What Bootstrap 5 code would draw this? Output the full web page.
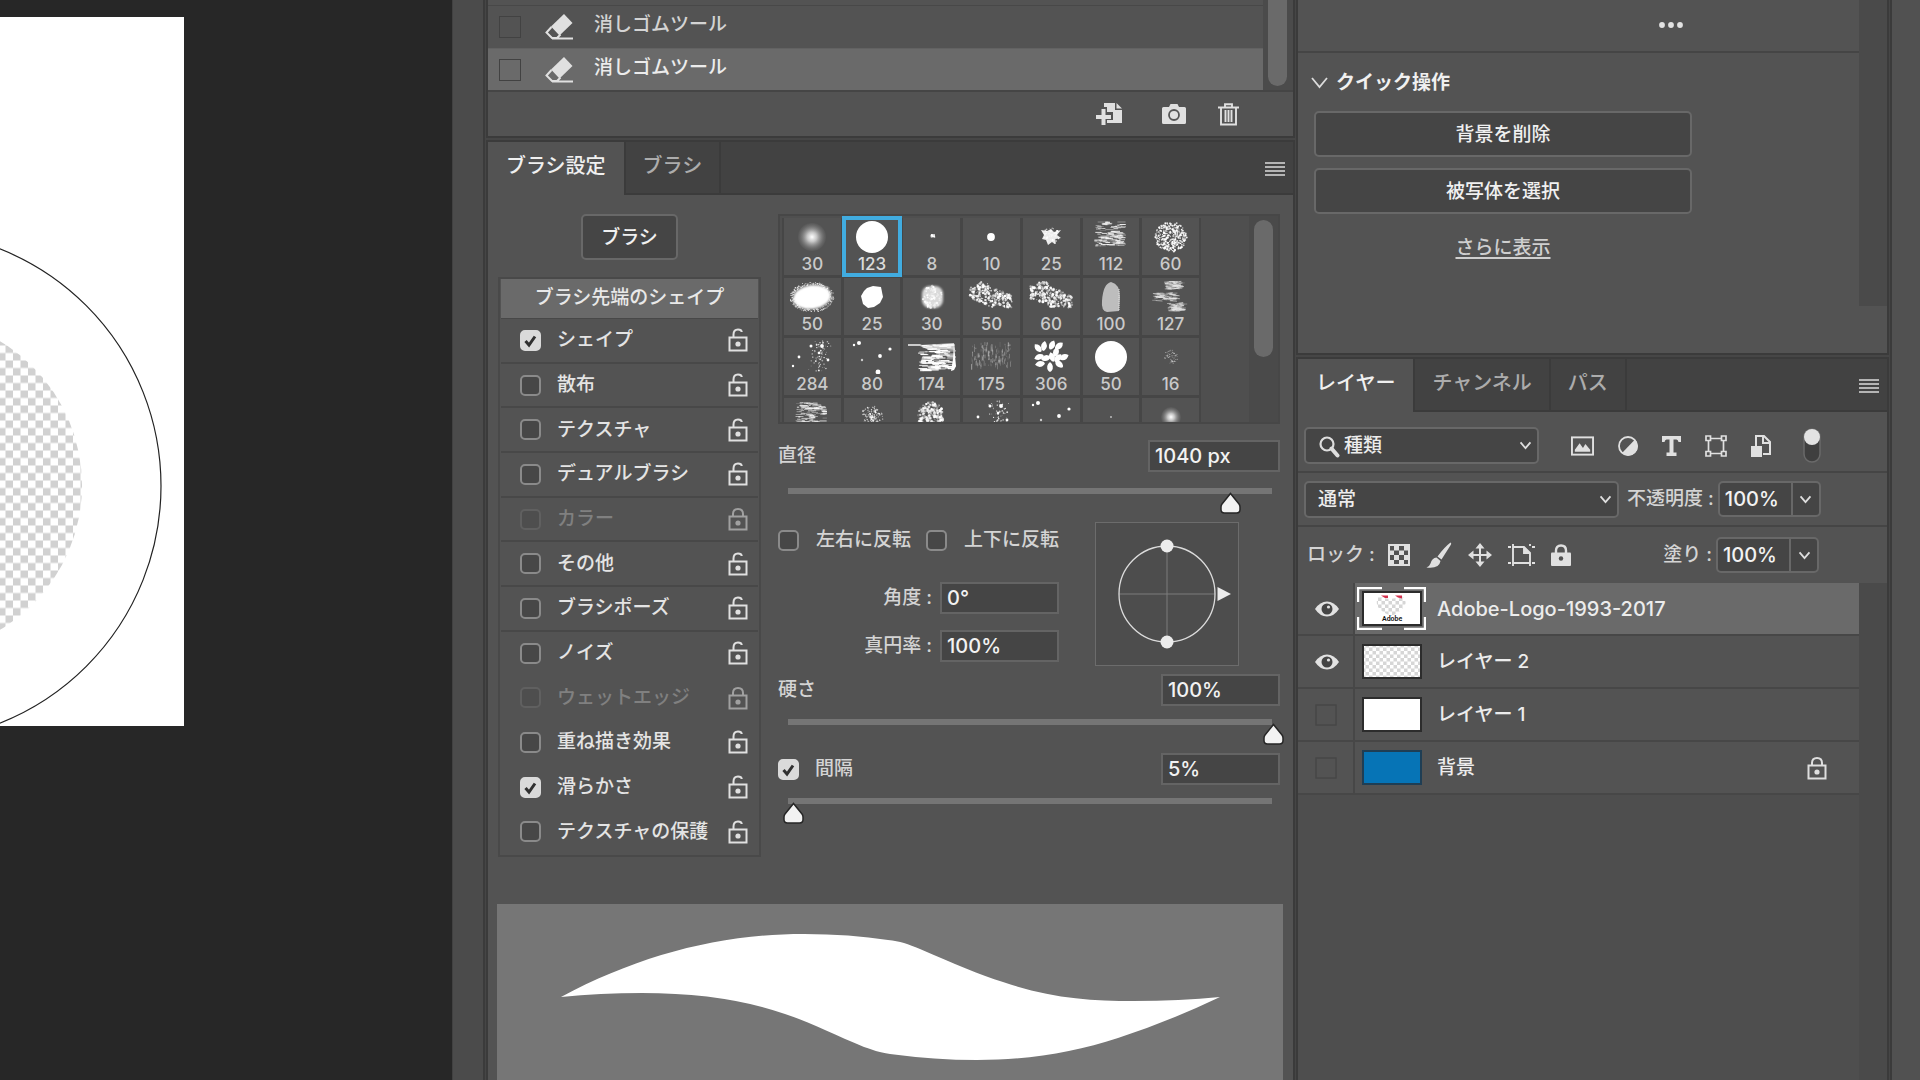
<!DOCTYPE html>
<html lang="ja">
<head>
<meta charset="utf-8">
<meta name="viewport" content="width=device-width, initial-scale=1">
<title>ブラシ設定</title>
<link rel="stylesheet" href="https://cdn.jsdelivr.net/npm/bootstrap@5.3.0/dist/css/bootstrap.min.css">
<style>
:root{--panel:#535353;--dark:#454545;--line:#3b3b3b;--edge:#686868;--sel:#6a6a6a;--soft:#d4d4d4;--bright:#ececec}
body{font-family:Inter,"Noto Sans CJK JP",sans-serif;font-size:19px;line-height:28px;font-weight:500;color:var(--soft);background:#272727}
button,input,select{font:inherit;color:inherit}
svg{display:block;flex:none}
.ink{color:#e0e0e0}
.app{min-width:1600px;height:100vh;overflow:hidden}
.stage{min-width:184px;overflow:hidden;padding-top:17px}
.gutter-l{width:31px;background:#4b4b4b;border-left:1px solid #414141}
.gutter-r{width:28px;background:#515151}
.dock{background:#464646;border:solid var(--line);border-width:0 2px;padding:0 1px;gap:1px}
.dock-a{width:809px}
.dock-b{width:593px}
.pane{background:var(--panel);border:2px solid var(--line)}
.pane-top{border-top:0}
.pane-fill{border-bottom:0;margin-top:2px}
.plain{background:none;border:0;padding:0}
/* tabs */
.tabbar{background:#424242;height:53px;border-bottom:2px solid var(--line)}
.tabbar .nav-link{height:53px;padding:0 17px;font-size:20px;line-height:48px;color:#acacac;border-right:2px solid var(--line);border-radius:0}
.tabbar .nav-link.active{background:var(--panel);color:#f0f0f0;padding:0 18px}
/* history */
.hist{background:#4b4b4b}
.hist-list{padding-top:5px;background:var(--panel)}
.hist-row{height:43px;padding:0 11px;border-top:1px solid #484848}
.hist-row.on{height:42px;background:var(--sel);border-color:#626262;color:var(--bright)}
.hist-row span{line-height:38px}
.sqbox{appearance:none;width:22px;height:22px;margin:0;border:1px solid #424242;background:none;flex:none}
.hist-track{width:30px;padding-left:5px}
.hist-track .thumbbar{border-radius:0 0 10px 10px}
.thumbbar{width:19px;background:var(--sel);border-radius:10px}
.hist-foot{height:46px;border-top:2px solid #454545;padding-right:54px}
/* shared controls */
.btn-ps{background:var(--dark);border:2px solid var(--edge);border-radius:5px;color:#f0f0f0;font-size:19px;font-weight:500;line-height:28px;padding:8px 18px 6px}
.btn-ps:hover{background:#4d4d4d;color:#fff}
.form-check-input.cb{width:21px;height:21px;margin:0;float:none;flex:none;border:2px solid #8a8a8a;border-radius:5px;background-color:#474747}
.form-check-input.cb:checked{background-color:#dadada;border-color:#dadada;background-size:17px;background-image:url("data:image/svg+xml,%3Csvg xmlns='http://www.w3.org/2000/svg' viewBox='0 0 17 17'%3E%3Cpath d='M3.500 9l3.500 4 6-8.500' fill='none' stroke='%23303030' stroke-width='3'/%3E%3C/svg%3E")}
.form-check-input.cb:disabled{border-color:#606060;background-color:#4e4e4e;opacity:1}
.field{height:32px;background:var(--dark);border:2px solid #646464;padding:0 5px;color:#f2f2f2;font-size:20px;line-height:28px;min-width:0}
.w-field{width:119px}
.w-field-lg{width:132px}
.ctl-row{width:502px}
.slider{appearance:none;display:block;width:506px;height:26px;margin:13px 0 0;background:none}
.slider::-webkit-slider-runnable-track{height:26px;background:linear-gradient(#757575,#757575) 10px 0/484px 6px no-repeat}
.slider::-webkit-slider-thumb{appearance:none;width:21px;height:22px;margin-top:4px;background:url("data:image/svg+xml,%3Csvg xmlns='http://www.w3.org/2000/svg' viewBox='0 0 21 22'%3E%3Cpath d='M10.500 1.500L19 12q1 1.300 1 3v2.500q0 3.500-3.500 3.500h-12Q1 21 1 17.500V15q0-1.700 1-3z' fill='%23f2f2f2' stroke='%23262626' stroke-width='1.500'/%3E%3C/svg%3E")}
/* brush settings */
.settings{padding:19px 7px 0 10px;gap:17px}
.opt-col{width:263px}
.opt-box{height:580px;margin-top:17px;border:2px solid #494949;padding:0 1px}
.opt-head{background:var(--sel);height:40px;line-height:38px;border-bottom:1px solid #484848;color:#e8e8e8}
.opt-row{padding:0 10px 0 19px;color:#e4e4e4;border-bottom:2px solid #484848;min-height:0}
.opt-row.open{border-color:transparent}
.opt-row label{margin-left:16px}
.opt-row.off{color:#808080}
.opt-row.off svg{color:#a0a0a0}
.brushes{width:502px;height:210px;overflow:hidden;border:2px solid #474747;background:#4f4f4f;padding:2px 0 0 2px}
.brush-grid{display:grid;grid-template-columns:repeat(7,1fr);grid-auto-rows:57px;gap:3px;width:419px;padding:0 2px;background:#464646}
.brush{background:var(--panel);font-size:17px;line-height:20px;color:#cacaca}
.brush.on{outline:4px solid #41ace0;outline-offset:-2px;color:#dcdcdc}
.brush-track{width:29px;margin-top:-2px;padding:4px 5px;background:#4a4a4a}
.brush-track .thumbbar{height:137px}
.tip{width:144px;height:144px;border:1px solid #6c6c6c;background:#4d4d4d;margin-right:47px}
.flip{padding-top:4px}
.flip label{margin:0 15px 0 17px}
.flip label:last-child{margin-right:0}
.stroke-view{background:#767676;margin:47px 10px 0 9px}
/* properties */
.props{height:353px}
.props-more{height:53px;border-bottom:2px solid #454545;padding:18px 176px 0 0}
.props-track{width:28px;height:306px;background:#4a4a4a}
.quick{padding:16px 167px 0 16px}
.quick h2{font-size:19px;line-height:28px;font-weight:700;color:#f0f0f0;margin:0 0 14px}
.quick h2 svg{margin:0 7px 0 -3px}
.quick a{color:#cfcfcf;text-underline-offset:3px;text-decoration-thickness:2px}
/* layers */
.bar{height:54px;padding-left:6px;border-bottom:2px solid #454545}
.bar-kind{height:61px;padding-top:8px}
.bar-lock{height:56px;padding:0 68px 0 9px;border:0}
.sel-ps{background:var(--dark) url("data:image/svg+xml,%3Csvg xmlns='http://www.w3.org/2000/svg' viewBox='0 0 14 10'%3E%3Cpath d='M1.500 1.500L7 8l5.500-6.500' fill='none' stroke='%23dedede' stroke-width='2'/%3E%3C/svg%3E") right 5px center/13px 9px no-repeat;border:2px solid var(--edge);border-radius:5px;height:37px;padding:1px 24px 0 12px;font-size:19px;line-height:28px;font-weight:500;color:#ececec}
.sel-kind{width:235px;padding-left:38px}
.sel-mode{width:315px}
.kind-wrap svg{position:absolute;left:15px;top:9px}
.pct{width:103px;height:36px;background:var(--dark);border:2px solid var(--edge);border-radius:5px}
.pct input{width:73px;background:none;border:0;border-right:2px solid var(--edge);padding:0 0 0 5px;color:#f2f2f2;font-size:20px}
.pct button{width:26px}
.kinds{margin-left:32px;gap:24px}
.locks{margin-left:13px;gap:16px}
.lay-area{background:#4e4e4e}
.lay-track{width:28px;background:#4a4a4a}
.lay-list{height:212px}
.lay-row{flex:1 1 0;min-height:0;background:var(--panel);border-bottom:2px solid #474747}
.lay-eye{width:57px;padding-left:17px;border-right:2px solid #474747}
.lay-row.on .lay-body{background:var(--sel)}
.lay-body{padding:0 32px 0 7px;color:#ececec}
.lay-thumb{margin-right:15px}
.lay-thumb.framed{margin:0 11px 0 -5px}
.lay-latin{font-size:20px}
.lay-body .ms-auto{color:#dedede}
</style>
</head>
<body>
<svg width="0" height="0" class="position-absolute" aria-hidden="true">
  <defs>
    <pattern id="chk" width="15" height="15" x="13" y="360.500" patternUnits="userSpaceOnUse"><rect width="15" height="15" fill="#fff"/><path d="M7.500 0H15v7.500H7.500zM0 7.500h7.500V15H0z" fill="#d1d1d1"/></pattern>
    <pattern id="chks" width="7" height="7" patternUnits="userSpaceOnUse"><rect width="7" height="7" fill="#fff"/><path d="M3.500 0H7v3.500H3.500zM0 3.500h3.500V7H0z" fill="#d6d6d6"/></pattern>
    <radialGradient id="softdot"><stop offset="0" stop-color="#fff"/><stop offset=".35" stop-color="#c4c4c4"/><stop offset="1" stop-color="#7a7a7a" stop-opacity=".15"/></radialGradient>
    <filter id="fuzz"><feGaussianBlur stdDeviation="1"/></filter>
    <symbol id="i-open" viewBox="0 0 20 24"><path d="M1.500 9.500h17v13h-17zM5.500 9.500V6.500q0-5 4.500-5 3.500 0 3.800 2.500" fill="none" stroke="currentColor" stroke-width="2"/><circle cx="10" cy="16" r="2.600" fill="currentColor"/></symbol>
    <symbol id="i-lock" viewBox="0 0 20 24"><path d="M1.500 9.500h17v13h-17zM5 9.500V7q0-5 5-5t5 5v2.500" fill="none" stroke="currentColor" stroke-width="2"/><circle cx="10" cy="16" r="2.600" fill="currentColor"/></symbol>
    <symbol id="i-erase" viewBox="0 0 29 26"><path d="M19 0l8.500 9L14.500 21.500 6 12.500z" fill="currentColor"/><path d="M6.500 13L1.500 18.500l5.500 5.500h5l3.500-3.500M7 24.500h21" fill="none" stroke="currentColor" stroke-width="2"/></symbol>
    <symbol id="i-menu" viewBox="0 0 20 14"><path d="M0 1h20M0 5h20M0 9h20M0 13h20" stroke="#b4b4b4" stroke-width="1.800"/></symbol>
    <symbol id="i-chev" viewBox="0 0 14 10"><path d="M1.500 1.500L7 8l5.500-6.500" fill="none" stroke="#dedede" stroke-width="2"/></symbol>
    <symbol id="i-eye" viewBox="0 0 24 16"><path d="M0 8Q5 .500 12 .500T24 8q-5 7.500-12 7.500T0 8z" fill="#e2e2e2"/><circle cx="12" cy="8" r="5.500" fill="#454545"/><circle cx="13.500" cy="6" r="1.600" fill="#e2e2e2"/></symbol>
  </defs>
</svg>

<div class="app d-flex">
  <main class="stage flex-fill">
    <svg width="184" height="709" viewBox="0 17 184 709" role="img" aria-label="ドキュメント">
      <rect y="17" width="184" height="709" fill="#fff"/>
      <circle cx="-86" cy="485.500" r="168" fill="url(#chk)"/>
      <circle cx="-94" cy="486" r="255" fill="none" stroke="#222" stroke-width="1.200"/>
    </svg>
  </main>
  <div class="gutter-l"></div>

  <div class="dock d-flex">
    <div class="dock-a d-flex flex-column">
      <section class="pane pane-top" aria-label="ヒストリー">
        <div class="hist d-flex">
          <div class="hist-list flex-fill">
            <div class="hist-row d-flex align-items-center">
              <input type="checkbox" class="sqbox" aria-label="ヒストリーブラシのソース">
              <svg class="ink ms-4 me-3" width="29" height="26"><use href="#i-erase"/></svg><span class="ms-1 align-self-start">消しゴムツール</span>
            </div>
            <div class="hist-row on d-flex align-items-center">
              <input type="checkbox" class="sqbox" aria-label="ヒストリーブラシのソース">
              <svg class="ink ms-4 me-3" width="29" height="26"><use href="#i-erase"/></svg><span class="ms-1 align-self-start">消しゴムツール</span>
            </div>
          </div>
          <div class="hist-track d-flex"><div class="thumbbar mb-1"></div></div>
        </div>
        <div class="hist-foot d-flex justify-content-end align-items-center ink">
          <button class="plain ink" aria-label="新規ドキュメントを作成"><svg width="26" height="22" viewBox="0 0 26 22"><path d="M8 0h11v7h7v13H11v-3h6V9h-6V4H8z" fill="currentColor"/><path d="M20.500 0L26 5.500h-5.500z" fill="currentColor"/><path d="M7.500 6v16M0 14h15" stroke="currentColor" stroke-width="4"/></svg></button>
          <button class="plain ink ms-4 me-3 px-3" aria-label="新規スナップショットを作成"><svg width="24" height="20" viewBox="0 0 24 20"><path d="M1.500 3H7l1.500-3h7L17 3h5.500Q24 3 24 4.500v14q0 1.500-1.500 1.500h-21Q0 20 0 18.500v-14Q0 3 1.500 3z" fill="currentColor"/><circle cx="12" cy="11" r="5" fill="none" stroke="#555" stroke-width="1.800"/></svg></button>
          <button class="plain ink" aria-label="削除"><svg width="21" height="23" viewBox="0 0 21 23"><path d="M0 4.500h21M3 4v17.500h15V4M7 4V1.200h7V4M7.500 7v12M10.500 7v12M13.500 7v12" fill="none" stroke="currentColor" stroke-width="1.900"/></svg></button>
        </div>
      </section>

      <section class="pane pane-fill flex-fill d-flex flex-column" aria-label="ブラシ設定パネル">
        <nav class="nav tabbar align-items-start">
          <a class="nav-link active" href="#">ブラシ設定</a><a class="nav-link" href="#">ブラシ</a>
          <button class="plain ms-auto me-2 pt-3" aria-label="メニュー"><svg class="mt-1" width="20" height="14"><use href="#i-menu"/></svg></button>
        </nav>
        <div class="settings d-flex">
          <div class="opt-col">
            <div class="text-center"><button class="btn btn-ps">ブラシ</button></div>
            <div class="opt-box d-flex flex-column" id="opts"><div class="opt-head text-center">ブラシ先端のシェイプ</div></div>
          </div>
          <div class="flex-fill">
            <div class="brushes d-flex justify-content-between">
              <div><div class="brush-grid" id="brushes"></div></div>
              <div class="brush-track"><div class="thumbbar"></div></div>
            </div>
            <div class="ctl-row d-flex justify-content-between align-items-center mt-3"><label for="dia">直径</label><input id="dia" class="field w-field-lg" value="1040 px"></div>
            <input type="range" class="slider mt-3" aria-label="直径" min="0" max="1000" value="911">
            <div class="d-flex justify-content-between mt-2">
              <div>
                <div class="flip d-flex align-items-center"><input type="checkbox" class="form-check-input cb" id="fx"><label for="fx">左右に反転</label><input type="checkbox" class="form-check-input cb" id="fy"><label for="fy">上下に反転</label></div>
                <div class="d-flex align-items-center justify-content-end mt-4 pt-1"><label for="ang" class="me-2">角度 :</label><input id="ang" class="field w-field" value="0°"></div>
                <div class="d-flex align-items-center justify-content-end mt-3"><label for="rnd" class="me-2">真円率 :</label><input id="rnd" class="field w-field" value="100%"></div>
              </div>
              <div class="tip"><svg width="142" height="142" viewBox="0 0 142 142"><path d="M71 23v96M23 71h96" stroke="#7d7d7d"/><circle cx="71" cy="71" r="48" fill="none" stroke="#dcdcdc" stroke-width="1.300"/><circle cx="71" cy="23" r="6.500" fill="#ececec"/><circle cx="71" cy="119" r="6.500" fill="#ececec"/><path d="M121.500 64v14l13.500-7z" fill="#ececec"/></svg></div>
            </div>
            <div class="ctl-row d-flex justify-content-between align-items-center mt-2"><label for="hard">硬さ</label><input id="hard" class="field w-field" value="100%"></div>
            <input type="range" class="slider" aria-label="硬さ" min="0" max="100" value="100">
            <div class="ctl-row d-flex align-items-center mt-2"><input type="checkbox" class="form-check-input cb me-3" id="sp" checked><label for="sp">間隔</label><input aria-label="間隔の値" class="field w-field ms-auto" value="5%"></div>
            <input type="range" class="slider" aria-label="間隔" min="0" max="1000" value="10">
          </div>
        </div>
        <div class="stroke-view flex-fill overflow-hidden"><svg width="786" height="176" viewBox="497 904 786 176"><path d="M561 997C640 955 720 934 804 934Q850 934 888 940C900 941 908 944 920 949C955 964 980 975 1003 982C1050 998 1090 1001 1134 1001Q1180 1001 1220 997Q1170 1021 1118 1038C1075 1052 1030 1060 977 1060Q935 1060 890 1054C878 1052 873 1050 864 1047C835 1035 810 1022 785 1014Q725 993 642 993Q600 993 561 997z" fill="#fff"/></svg></div>
      </section>
    </div>

    <div class="dock-b d-flex flex-column">
      <section class="pane pane-top" aria-label="プロパティ">
        <div class="props d-flex">
          <div class="flex-fill">
            <div class="props-more d-flex justify-content-end"><button class="plain align-self-start" aria-label="その他"><svg width="24" height="14" viewBox="0 0 24 14"><g fill="#e2e2e2"><circle cx="3" cy="7" r="2.900"/><circle cx="12" cy="7" r="2.900"/><circle cx="21" cy="7" r="2.900"/></g></svg></button></div>
            <div class="quick">
              <h2 class="d-flex align-items-center"><svg width="18" height="12" viewBox="0 0 18 12"><path d="M1 1l7.500 9L16 1" fill="none" stroke="#dcdcdc" stroke-width="1.800"/></svg><span>クイック操作</span></h2>
              <div class="d-grid" style="gap:11px"><button class="btn btn-ps">背景を削除</button><button class="btn btn-ps">被写体を選択</button></div>
              <div class="text-center mt-3 pt-1"><a href="#">さらに表示</a></div>
            </div>
          </div>
          <div class="props-track"></div>
        </div>
      </section>

      <section class="pane pane-fill flex-fill d-flex flex-column" aria-label="レイヤーパネル">
        <nav class="nav tabbar align-items-start">
          <a class="nav-link active" href="#">レイヤー</a><a class="nav-link" href="#">チャンネル</a><a class="nav-link" href="#">パス</a>
          <button class="plain ms-auto me-2 pt-3" aria-label="メニュー"><svg class="mt-1" width="20" height="14"><use href="#i-menu"/></svg></button>
        </nav>
        <div class="bar bar-kind d-flex align-items-center">
          <div class="kind-wrap position-relative"><select class="form-select sel-ps sel-kind" aria-label="フィルターの種類"><option>種類</option></select>
            <svg width="21" height="22" viewBox="0 0 21 22"><circle cx="8" cy="8" r="6.500" fill="none" stroke="#dedede" stroke-width="2.200"/><path d="M12.500 12.500l6 7" stroke="#dedede" stroke-width="4" stroke-linecap="round"/></svg></div>
          <div class="kinds d-flex align-items-center ink">
            <button class="plain ink" aria-label="ピクセルレイヤー"><svg width="23" height="20" viewBox="0 0 24 20"><rect x="1" y="1" width="22" height="18" fill="none" stroke="currentColor" stroke-width="2"/><path d="M4 16V14l5-7 3.500 5L15 8l5 6v2z" fill="currentColor"/></svg></button>
            <button class="plain ink" aria-label="調整レイヤー"><svg width="20" height="20" viewBox="0 0 20 20"><circle cx="10" cy="10" r="9" fill="none" stroke="currentColor" stroke-width="1.800"/><path d="M17 3.500A9 9 0 0 1 4 17z" fill="currentColor"/></svg></button>
            <button class="plain ink" aria-label="テキストレイヤー"><svg width="19" height="20" viewBox="0 0 19 20"><path d="M0 0h19v6h-2.500q-.5-2.500-2-2.500H11.500v13h3V20h-10v-3.500h3v-13H4.500Q3 3.500 2.500 6H0z" fill="currentColor"/></svg></button>
            <button class="plain ink" aria-label="シェイプレイヤー"><svg width="22" height="22" viewBox="0 0 22 22"><g fill="none" stroke="currentColor" stroke-width="1.700"><path d="M3.500 6v10M18.500 6v10M6 3.500h10M6 18.500h10"/><path d="M1 1h4.500v4.500H1zM16.500 1H21v4.500h-4.500zM1 16.500h4.500V21H1zM16.500 16.500H21V21h-4.500z"/></g></svg></button>
            <button class="plain ink" aria-label="スマートオブジェクト"><svg width="20" height="22" viewBox="0 0 20 22"><path d="M5 11V1h8l6 6v12h-7M12 1v7h7" fill="none" stroke="currentColor" stroke-width="2"/><path d="M0 11h11v11H0z" fill="currentColor"/></svg></button>
            <button class="plain ms-2" aria-label="フィルターのオン／オフ"><svg width="18" height="35" viewBox="0 0 18 35"><rect x="1" y="1" width="16" height="33" rx="8" fill="#3f3f3f" stroke="#6a6a6a" stroke-width="1.500"/><circle cx="9" cy="9" r="8" fill="#e2e2e2"/></svg></button>
          </div>
        </div>
        <div class="bar d-flex align-items-center">
          <select class="form-select sel-ps sel-mode" aria-label="描画モード"><option>通常</option></select>
          <label for="op" class="mx-1 ps-1">不透明度 :</label>
          <div class="pct d-flex"><input id="op" value="100%"><button class="plain d-flex align-items-center justify-content-center" aria-label="不透明度を選択"><svg width="13" height="9"><use href="#i-chev"/></svg></button></div>
        </div>
        <div class="bar bar-lock d-flex align-items-center">
          <span>ロック :</span>
          <div class="locks d-flex align-items-center ink">
            <button class="plain ink" aria-label="透明ピクセルをロック"><svg width="22" height="22" viewBox="0 0 22 22"><path d="M1 1h20v20H1z" fill="none" stroke="currentColor" stroke-width="2"/><path d="M6 2h5v4.500H6zM16 2h5v4.500h-5zM2 6.500h4V11H2zM11 6.500h5V11h-5zM6 11h5v5H6zM16 11h4v5h-4zM2 16h4v4H2zM11 16h5v4h-5z" fill="currentColor"/></svg></button>
            <button class="plain ink" aria-label="画像ピクセルをロック"><svg width="26" height="26" viewBox="0 0 25 26"><path d="M24 0.500q1 .5.500 2L15 17.500l-4-3Q18 5 24 .500zM10 15.500l4 3.500q-.5 3-3 5-4 2.500-11 1.500 3-1 4-4 1.500-5.500 6-6z" fill="currentColor"/></svg></button>
            <button class="plain ink" aria-label="位置をロック"><svg width="24" height="24" viewBox="0 0 24 24"><path d="M12 3v18M3 12h18" stroke="currentColor" stroke-width="2"/><path d="M12 0l4.500 5.500h-9zM12 24l4.500-5.500h-9zM0 12l5.500-4.500v9zM24 12l-5.500-4.500v9z" fill="currentColor"/></svg></button>
            <button class="plain ink" aria-label="アートボードの自動ネストを防ぐ"><svg width="27" height="22" viewBox="0 0 27 22"><path d="M5 3h11l6 6v10H5zM16 3v6h6M5 0v2M0 3h3M22 0v2M24 3h3M5 20v2M0 19h3M22 20v2M24 19h3" fill="none" stroke="currentColor" stroke-width="1.900"/><path d="M16 3l6 6h-6z" fill="currentColor"/></svg></button>
            <button class="plain ink" aria-label="すべてをロック"><svg width="20" height="22" viewBox="0 0 20 22"><path d="M5 9V6.500q0-5 5-5t5 5V9" fill="none" stroke="currentColor" stroke-width="2.400"/><rect y="8.500" width="20" height="13.500" rx="1" fill="currentColor"/><circle cx="10" cy="14.500" r="2.200" fill="#505050"/></svg></button>
          </div>
          <label for="fl" class="ms-auto me-1">塗り :</label>
          <div class="pct d-flex"><input id="fl" value="100%"><button class="plain d-flex align-items-center justify-content-center" aria-label="塗りを選択"><svg width="13" height="9"><use href="#i-chev"/></svg></button></div>
        </div>
        <div class="lay-area flex-fill d-flex">
          <div class="flex-fill"><div class="lay-list d-flex flex-column">
            <div class="lay-row on d-flex">
              <button class="plain lay-eye" aria-label="表示"><svg width="24" height="16"><use href="#i-eye"/></svg></button>
              <div class="lay-body flex-fill d-flex align-items-center"><svg class="lay-thumb framed" width="69" height="43" viewBox="0 0 69 43"><path d="M1 15V1h24M47 1h21v14M1 30v12h24M47 42h21V30" fill="none" stroke="#fff" stroke-width="2.400"/><rect x="6" y="5" width="58" height="33" fill="#fff" stroke="#2c2c2c" stroke-width="2"/><path d="M22 9q11 6 23 0 5 4 3 9-3 7-14 11-12-5-14-11-1-6 2-9z" fill="url(#chks)"/><path d="M24 8.500h7v2.500h-3zM38 8.500h7v3l-4-1z" fill="#d2304c"/><text x="25" y="34" font-size="7" font-weight="600" fill="#111" font-family="Roboto, sans-serif">Adobe</text></svg><span class="lay-latin">Adobe-Logo-1993-2017</span></div>
            </div>
            <div class="lay-row d-flex">
              <button class="plain lay-eye" aria-label="表示"><svg width="24" height="16"><use href="#i-eye"/></svg></button>
              <div class="lay-body flex-fill d-flex align-items-center"><svg class="lay-thumb" width="60" height="35"><rect x="1" y="1" width="58" height="33" fill="url(#chks)" stroke="#2c2c2c" stroke-width="2"/></svg><span>レイヤー 2</span></div>
            </div>
            <div class="lay-row d-flex">
              <button class="plain lay-eye" aria-label="非表示"><svg width="22" height="22"><rect x="1" y="1" width="20" height="20" fill="none" stroke="#474747" stroke-width="1.500"/></svg></button>
              <div class="lay-body flex-fill d-flex align-items-center"><svg class="lay-thumb" width="60" height="35"><rect x="1" y="1" width="58" height="33" fill="#fff" stroke="#2c2c2c" stroke-width="2"/></svg><span>レイヤー 1</span></div>
            </div>
            <div class="lay-row d-flex">
              <button class="plain lay-eye" aria-label="非表示"><svg width="22" height="22"><rect x="1" y="1" width="20" height="20" fill="none" stroke="#474747" stroke-width="1.500"/></svg></button>
              <div class="lay-body flex-fill d-flex align-items-center"><svg class="lay-thumb" width="60" height="35"><rect x="1" y="1" width="58" height="33" fill="#0674b6" stroke="#1f3e54" stroke-width="2"/></svg><span>背景</span><svg class="ms-auto" width="20" height="24"><use href="#i-lock"/></svg></div>
            </div>
          </div></div>
          <div class="lay-track"></div>
        </div>
      </section>
    </div>
  </div>
  <div class="gutter-r"></div>
</div>

<script src="https://cdn.jsdelivr.net/npm/bootstrap@5.3.0/dist/js/bootstrap.bundle.min.js"></script>
<script>
// Option rows: name, checked, disabled, divider below
const options = [
  ['シェイプ',1,0,1],['散布',0,0,1],['テクスチャ',0,0,1],['デュアルブラシ',0,0,1],['カラー',0,1,1],['その他',0,0,1],
  ['ブラシポーズ',0,0,1],['ノイズ',0,0,0],['ウェットエッジ',0,1,0],['重ね描き効果',0,0,0],['滑らかさ',1,0,0],['テクスチャの保護',0,0,0]];
document.getElementById('opts').insertAdjacentHTML('beforeend', options.map(([n,c,d,b],i)=>
  `<div class="opt-row d-flex align-items-center flex-fill ${d?'off':''} ${b?'':'open'}">
    <input type="checkbox" class="form-check-input cb" id="o${i}" ${c?'checked':''} ${d?'disabled':''}><label for="o${i}" class="opacity-100">${n}</label>
    <svg class="ms-auto ${d?'':'ink'}" width="20" height="24"><use href="#${d?'i-lock':'i-open'}"/></svg></div>`).join(''));

// Brush tip drawings, on a 56 x 34 canvas
let seed = 7;
const rnd = () => (seed = (seed * 16807) % 2147483647) / 2147483647;
const R = (a,b) => a + rnd()*(b-a);
const f = n => n.toFixed(1);
const dot = (x,y,r,c='#fff',o=1) => `<circle cx="${f(x)}" cy="${f(y)}" r="${f(r)}" fill="${c}" opacity="${f(o)}"/>`;
const many = (n,fn) => Array.from({length:n},(_,i)=>fn(i)).join('');
const disc = (cx,cy,rx,ry,n,a,b,lo=.5,k=.5) => many(n,()=>{const t=R(0,6.283),q=Math.pow(rnd(),k);return dot(cx+Math.cos(t)*rx*q,cy+Math.sin(t)*ry*q,R(a,b),'#fff',R(lo,1));});
const soft = r => `<circle cx="28" cy="17" r="${r}" fill="url(#softdot)"/>`;
const strokes = () => many(120,()=>{const y=R(2,26),x=R(11,39),w=R(2,9);return `<path d="M${f(x)} ${f(y)}h${f(Math.min(w,43-x))}" stroke="#fff" stroke-width="${f(R(.4,1.1))}" opacity="${f(R(.4,1))}"/>`;});
const cluster = () => many(210,()=>{const t=R(-1,1);return dot(28+t*21,17+t*5+R(-1,1)*(10-Math.abs(t)*4),R(.5,1.5),'#fff',R(.3,1));}) + disc(20,6,6,5,30,.5,1.4);
const scatter = () => many(75,()=>dot(36+R(-1,1)*R(2,13),16+R(-1,1)*15,R(.3,.9),'#fff',R(.4,1))) + dot(27,6,1.5)+dot(38,6,1.9)+dot(35,13,1.3)+dot(15,17,1.4)+dot(44,20,1.4)+dot(9,26,1.2);
const few = () => dot(10,5,1.2)+dot(15,3,2)+dot(46,9,1.6)+dot(36,16,1.9)+dot(18,20,1.2,'#ccc')+dot(34,32,2.4);
const leaves = () => [[15,8,-40],[21,6,10],[29,5,25],[36,6,50],[33,12,15],[41,17,65],[16,17,-110],[23,18,75],[29,17,-20],[35,18,40],[17,24,-100],[27,27,0],[36,24,-50]]
  .map(([x,y,a])=>`<path transform="translate(${x} ${y}) rotate(${a})" d="M0-5Q5-1 1.500 4L0 5L-1.500 4Q-5-1 0-5z" fill="#fff"/>`).join('');
const tips = [
 [30,()=>soft(14)],
 [123,()=>dot(28,17,16)],
 [8,()=>disc(28,17,2.5,2.500,9,.8,1.6)+dot(30,15,1,'#ddd')],
 [10,()=>dot(28,17,3.900)],
 [25,()=>`<path d="M18 10l6 1 4-2 3 3 7-2-4 5 4 3-6 1 1 5-4-2-4 3-2-5-4-1 2-4z" fill="#ececec"/>`+disc(28,16,9,8,40,.4,1.1)],
 [112,strokes],
 [60,()=>disc(28,17,16,15,330,.5,1.1,.5,.5)],
 [50,()=>`<ellipse cx="28" cy="17" rx="19" ry="12" fill="#fff" filter="url(#fuzz)" transform="rotate(-8 28 17)"/>`+many(240,()=>{const t=R(0,6.283),q=R(.8,1);return dot(28+Math.cos(t)*22*q,17+Math.sin(t)*15*q,.5,'#fff',R(.5,1));})],
 [25,()=>'<path d="M23 8l6-2 8 1 2 10-3 6-6 4-6 1-5-4-2-8 3-5z" fill="#fff"/>'],
 [30,()=>'<rect x="18" y="6" width="21" height="22" rx="8" fill="#dadada" filter="url(#fuzz)"/>'+disc(28,17,10,11,90,.5,1.4,.1)],
 [50,cluster],[60,cluster],
 [100,()=>'<path d="M28 2q9 2 9 15l-1 14-12 1q-6-1-5-11 1-17 9-19z" fill="#bdbdbd"/><path d="M36 9v21" stroke="#e0e0e0" stroke-dasharray="1 1"/>'],
 [127,()=>many(230,i=>{const k=i%3,x=[21,9,24][k]+R(0,[15,22,14][k]),y=[5,17,27][k]+R(-4,4);return `<path d="M${f(x)} ${f(y)}l${f(R(2,8))} ${f(R(-.6,.8))}" stroke="#e8e8e8" stroke-width="${f(R(.4,1.1))}" opacity="${f(R(.3,.9))}"/>`;})],
 [284,scatter],[80,few],
 [174,()=>'<path d="M4 4h12l2 1 32-2 1 7-14-1-12 1-9-4H4z" fill="#fff" opacity=".7"/>'+many(130,()=>{const y=R(5,31),x=R(14,44),w=R(3,12);return `<path d="M${f(x)} ${f(y)}h${f(Math.min(w,52-x))}" stroke="#fff" stroke-width="${f(R(.5,1.3))}"/>`;})+'<path d="M50 4l1 12 1 10-2 4-3 1 2-12z" fill="#fff"/>'],
 [175,()=>many(130,()=>`<path d="M${f(R(8,48))} ${f(R(2,25))}v${f(R(1,6))}" stroke="#ccc" stroke-width=".6" opacity="${f(R(.2,.8))}"/>`)],
 [306,leaves],
 [50,()=>dot(28,17,16)],
 [16,()=>disc(28,17,7,7,60,.3,.6,.3)],
 ['',strokes],
 ['',()=>disc(28,17,11,11,200,.3,.8,.3,.8)],
 ['',()=>disc(27,16,13,14,260,.6,1.5,.1)],
 ['',scatter],
 ['',few],
 ['',()=>dot(28,17,1,'#bbb')],
 ['',()=>soft(10)]
];
document.getElementById('brushes').innerHTML = tips.map(([n,draw],i)=>
  `<button class="plain brush ${i===1?'on':''}" aria-label="ブラシ ${n}"><svg class="mx-auto" width="56" height="34" viewBox="0 0 56 34">${draw()}</svg>${n||'&nbsp;'}</button>`).join('');
</script>
</body>
</html>
